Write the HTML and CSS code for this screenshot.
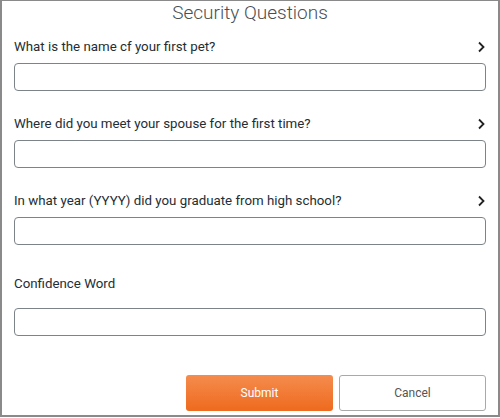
FILE: index.html
```html
<!DOCTYPE html>
<html lang="en">
<head>
    <meta charset="UTF-8">
    <meta name="viewport" content="width=device-width, initial-scale=1.0">
    <title>Security Questions</title>
    <link rel="stylesheet" href="styles.css">
</head>
<body>

    <div class="frame">
        <h1 class="titulo">Security Questions</h1>

        <!-- Perguntas de seguranca -->
        <div class="campo">
            <div class="linha">
                <label for="q1">What is the name cf your first pet?</label>
                <svg class="seta" width="7" height="12" viewBox="0 0 7 12"><polyline points="1,1.5 5.5,6 1,10.5" fill="none" stroke="#222" stroke-width="1.8"/></svg>
            </div>
            <input id="q1" type="text">
        </div>

        <div class="campo">
            <div class="linha">
                <label for="q2">Where did you meet your spouse for the first time?</label>
                <svg class="seta" width="7" height="12" viewBox="0 0 7 12"><polyline points="1,1.5 5.5,6 1,10.5" fill="none" stroke="#222" stroke-width="1.8"/></svg>
            </div>
            <input id="q2" type="text">
        </div>

        <div class="campo">
            <div class="linha">
                <label for="q3">In what year (YYYY) did you graduate from high school?</label>
                <svg class="seta" width="7" height="12" viewBox="0 0 7 12"><polyline points="1,1.5 5.5,6 1,10.5" fill="none" stroke="#222" stroke-width="1.8"/></svg>
            </div>
            <input id="q3" type="text">
        </div>

        <div class="campo confianca">
            <div class="linha">
                <label for="q4">Confidence Word</label>
            </div>
            <input id="q4" type="text">
        </div>

        <div class="botoes">
            <button class="enviar">Submit</button>
            <button class="cancelar">Cancel</button>
        </div>
    </div>

</body>
</html>
```

FILE: styles.css
```css
body {
    margin: 0;
    font-family: Roboto, "Liberation Sans", sans-serif;
    background: #fff;
}
.frame {
    box-sizing: border-box;
    width: 500px;
    height: 417px;
    border: 1px solid #8a8a8a;
    border-left-width: 2px;
    border-right-width: 2px;
    border-bottom-width: 2px;
    padding: 0 12px;
}
.titulo {
    margin: 0;
    font-size: 19px;
    font-weight: 300;
    line-height: 23px;
    color: #4a4f52;
    text-align: center;
}
.campo {
    margin-top: 15px;
}
.campo + .campo {
    margin-top: 25px;
}
.linha {
    display: flex;
    justify-content: space-between;
    align-items: center;
    height: 16px;
    margin-bottom: 8px;
}
.linha label {
    font-size: 13.3px;
    line-height: 16px;
    color: #232e34;
}
.seta {
    display: block;
    margin-right: 1px;
}
.campo input {
    display: block;
    box-sizing: border-box;
    width: 100%;
    height: 28px;
    border: 1px solid #7d8489;
    border-radius: 4px;
    background: #fff;
    margin: 0;
}
.campo.confianca {
    margin-top: 31px;
}
.confianca .linha {
    margin-bottom: 16px;
}
.botoes {
    display: flex;
    justify-content: flex-end;
    gap: 6px;
    margin-top: 39px;
}
.botoes button {
    width: 147px;
    height: 36px;
    font-family: Roboto, "Liberation Sans", sans-serif;
    font-size: 12px;
    border-radius: 3px;
    cursor: pointer;
}
.enviar {
    border: none;
    color: #fff;
    background: linear-gradient(#f58c4e, #ee6a1e);
}
.cancelar {
    border: 1px solid #a9a9a9;
    background: #fff;
    color: #555;
}
```
